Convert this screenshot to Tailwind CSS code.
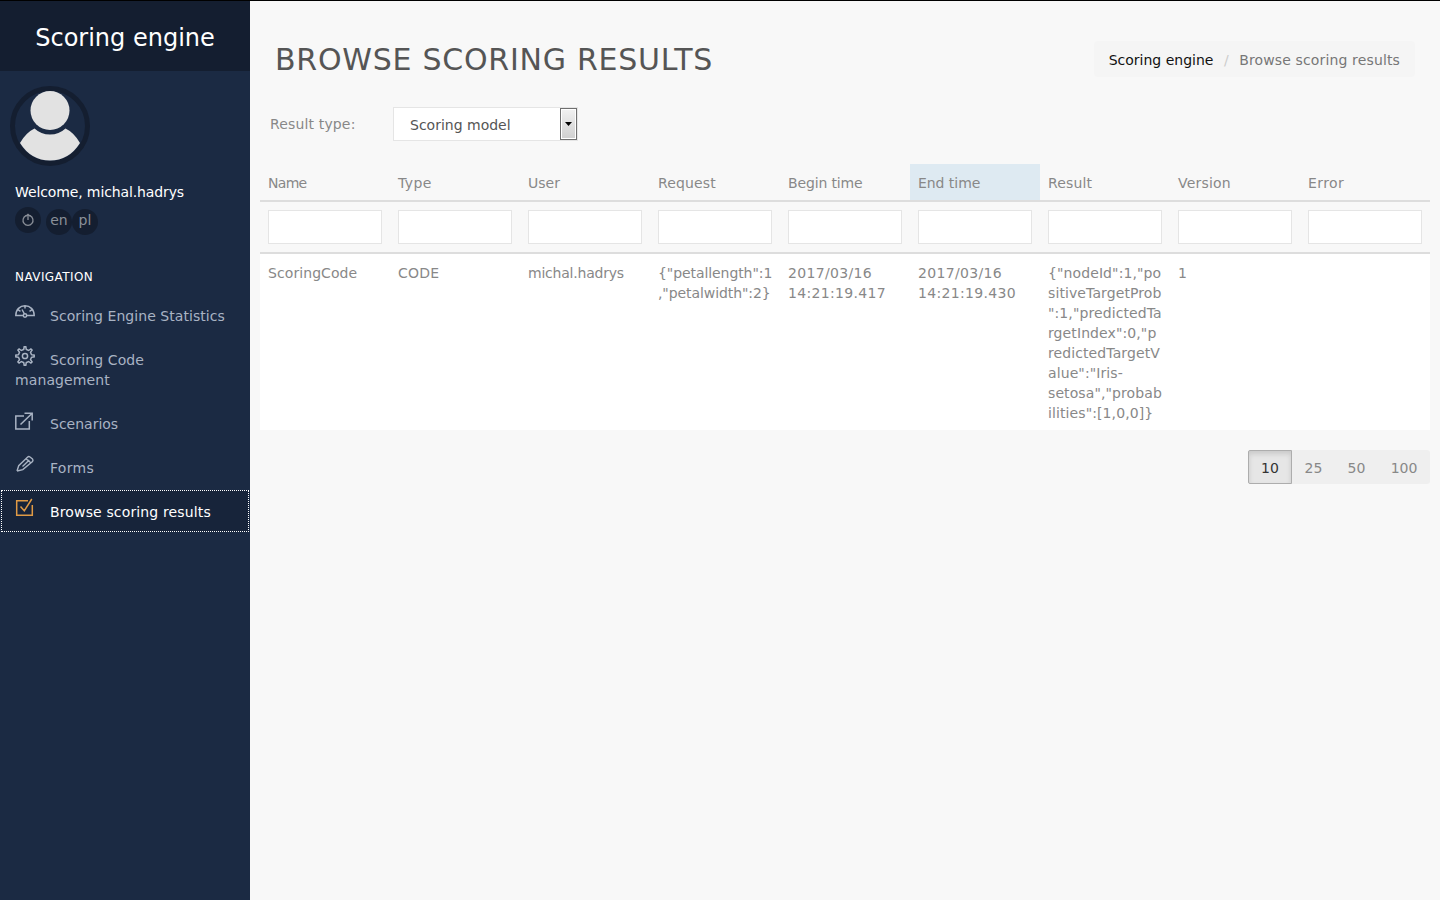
<!DOCTYPE html>
<html lang="en">
<head>
<meta charset="utf-8">
<title>Scoring engine</title>
<script src="https://cdn.jsdelivr.net/npm/@tailwindcss/browser@4"></script>
</head>
<body class="flex h-[900px] overflow-hidden border-t border-black bg-[#f8f8f8] font-['DejaVu_Sans',sans-serif] text-[14px] leading-5 text-[#888]">
<aside class="flex w-[250px] shrink-0 flex-col bg-[#1b2a43]">
  <div class="flex h-[70px] items-center justify-center bg-[#141e30] pt-1 text-[24px] text-white">Scoring engine</div>
  <div class="pt-[15px] pl-[10px]">
    <svg class="block" width="80" height="80" viewBox="0 0 80 80">
      <circle cx="40" cy="40" r="37.500" fill="none" stroke="#141e30" stroke-width="5"/>
      <circle cx="40" cy="24.500" r="19.500" fill="#e2e2e2"/>
      <path d="M24.500 42.500Q31 48.500 40 48.500Q49 48.500 55.500 42.500Q64 46.500 70 57Q59 74.500 40 74.500Q21 74.500 10 57Q16 46.500 24.500 42.500Z" fill="#e2e2e2"/>
    </svg>
  </div>
  <div class="mt-4 pl-[15px] tracking-[-0.12px] text-white">Welcome, michal.hadrys</div>
  <div class="mt-[5px] flex h-7 pl-[15px] text-[#8a8f98]">
    <span class="flex size-[26px] items-center justify-center rounded-full bg-[#141e30]">
      <svg width="14" height="14" viewBox="0 0 14 14" fill="none" stroke="#8a8f98" stroke-width="1.300"><path d="M5 2.700A5 5 0 1 0 9 2.700M4.800 3.200L7 1.300L9.200 3.200M7 1V7"/></svg>
    </span>
    <span class="mt-0.5 ml-[5px] flex size-[26px] justify-center rounded-full bg-[#141e30] pt-px">en</span>
    <span class="mt-0.5 flex size-[26px] justify-center rounded-full bg-[#141e30] pt-px">pl</span>
  </div>
  <div class="mt-8 pl-[15px] text-[12px] tracking-[0.42px] text-white">NAVIGATION</div>
  <nav class="mt-[7px] flex flex-col gap-0.5 text-[#a9b3c3]">
    <a class="block px-[15px] pt-3 pb-[10px]"><svg class="-mt-2 mr-[15px] inline-block align-[-1px]" width="20" height="20" viewBox="0 0 20 20" fill="none" stroke="currentColor" stroke-width="1.500"><path d="M8.300 13.500H.8C.8 7.500 5 3.800 10 3.800S19.200 7.500 19.200 13.500H11.700M10 3.800V6.500M3.300 7.800L5.500 9.300M16.700 7.800L14.500 9.300M7 7.500L9.500 12"/><circle cx="10" cy="13.500" r="1.700"/></svg><span class="tracking-[0.06px]">Scoring Engine Statistics</span></a>
    <a class="block px-[15px] pt-3 pb-[10px]"><svg class="-mt-2 mr-[15px] inline-block align-[-1px]" width="20" height="20" viewBox="0 0 20 20" fill="none" stroke="currentColor" stroke-width="1.500"><path d="M8.700 3.500L9.200.8H10.800L11.300 3.500L13.600 4.500L15.900 2.900L17.100 4.100L15.500 6.400L16.500 8.700L19.200 9.200V10.800L16.500 11.300L15.500 13.600L17.100 15.900L15.900 17.100L13.600 15.500L11.300 16.500L10.800 19.200H9.200L8.700 16.500L6.400 15.500L4.100 17.100L2.900 15.900L4.500 13.600L3.500 11.300L.8 10.800V9.200L3.500 8.700L4.500 6.400L2.900 4.100L4.100 2.900L6.400 4.500Z"/><circle cx="10" cy="10" r="2.600"/></svg><span class="tracking-[0.1px]">Scoring Code management</span></a>
    <a class="block px-[15px] pt-3 pb-[10px]"><svg class="-mt-2 mr-[15px] inline-block align-[-1px]" width="20" height="20" viewBox="0 0 20 20" fill="none" stroke="currentColor" stroke-width="1.500"><path d="M9 6H.8V19H14.300V11M9.500 3.200H17.200V10.500M17.200 3.200L5.500 14.500"/></svg>Scenarios</a>
    <a class="block px-[15px] pt-3 pb-[10px]"><svg class="-mt-2 mr-[15px] inline-block align-[-1px]" width="20" height="20" viewBox="0 0 20 20" fill="none" stroke="currentColor" stroke-width="1.400"><path d="M2 17L3.700 11.700L12.500 3.200Q13.700 2 15 3L17.500 5Q18.500 6.200 17.500 7.500L7.800 15.600L2 17M11 4.700L15.800 8.800M14.300 6L7.500 12.500"/></svg><span class="tracking-[0.3px]">Forms</span></a>
    <a class="mx-px block h-[42px] border border-dotted border-white bg-[#17243a] px-[13px] pt-[11px] text-white"><svg class="-mt-2 mr-[15px] inline-block align-[-1px] text-[#e09a45]" width="20" height="20" viewBox="0 0 20 20" fill="none" stroke="currentColor" stroke-width="1.500"><path d="M13 2.700H1.700V17.300H17.300V7M5.500 8.500L9.300 12.800L16.800 1"/></svg><span class="tracking-[0.14px]">Browse scoring results</span></a>
  </nav>
</aside>
<main class="min-w-0 flex-1 px-[10px]">
  <header class="flex h-[76px] justify-between px-[15px] pt-10">
    <h1 class="pt-px text-[30px] leading-9 tracking-[0.75px] text-[#555]">BROWSE SCORING RESULTS</h1>
    <div class="flex h-9 items-center rounded-sm bg-[#f5f5f5] px-[15px] pt-0.5"><span class="text-[#111]">Scoring engine</span><span class="mx-[10.500px] text-[#ccc]">/</span><span class="tracking-[0.14px] text-[#777]">Browse scoring results</span></div>
  </header>
  <div class="mt-[30px] flex h-[34px] pl-[10px]">
    <span class="w-[123px] pt-[7px] tracking-[0.15px]">Result type:</span>
    <div class="flex w-[185px] justify-between border border-[#e5e5e5] bg-white text-[#555]">
      <span class="pt-[7px] pl-4">Scoring model</span>
      <span class="flex w-[17px] items-center justify-center border border-[#707070] bg-linear-to-b from-[#f2f2f2] to-[#cfcfcf] shadow-[inset_0_0_0_1px_#fff]"><svg width="7" height="4" viewBox="0 0 7 4"><path d="M0 0H7L3.500 4Z" fill="#000"/></svg></span>
    </div>
  </div>
  <table class="mt-[23px] w-[1170px] table-fixed border-collapse text-left">
    <thead>
      <tr class="h-[37px] [&>th]:px-2 [&>th]:pt-[1px] [&>th]:font-normal"><th class="tracking-[-0.7px]">Name</th><th class="tracking-[0.4px]">Type</th><th>User</th><th class="tracking-[0.15px]">Request</th><th class="tracking-[-0.15px]">Begin time</th><th class="bg-[#deeaf2] tracking-[-0.05px]">End time</th><th class="tracking-[0.15px]">Result</th><th class="tracking-[0.2px]">Version</th><th class="tracking-[0.4px]">Error</th></tr>
      <tr class="h-[52px] border-y-2 border-[#ddd] [&>th]:px-2 [&>th]:py-0 [&_div]:h-[34px] [&_div]:border [&_div]:border-[#e5e5e5] [&_div]:bg-white"><th><div></div></th><th><div></div></th><th><div></div></th><th><div></div></th><th><div></div></th><th><div></div></th><th><div></div></th><th><div></div></th><th><div></div></th></tr>
    </thead>
    <tbody>
      <tr class="h-[177px] bg-white align-top [&>td]:px-2 [&>td]:pt-[9px] [&>td]:whitespace-nowrap"><td class="tracking-[0.08px]">ScoringCode</td><td class="tracking-[0.2px]">CODE</td><td class="tracking-[-0.22px]">michal.hadrys</td><td class="tracking-[-0.08px]">{"petallength":1<br>,"petalwidth":2}</td><td class="tracking-[0.32px]">2017/03/16<br>14:21:19.417</td><td class="tracking-[0.32px]">2017/03/16<br>14:21:19.430</td><td class="tracking-[0.1px]">{"nodeId":1,"po<br>sitiveTargetProb<br>":1,"predictedTa<br>rgetIndex":0,"p<br>redictedTargetV<br>alue":"Iris-<br>setosa","probab<br>ilities":[1,0,0]}</td><td>1</td><td></td></tr>
    </tbody>
  </table>
  <div class="mt-5 flex justify-end">
    <div class="flex h-[34px] rounded-[3px] bg-[#efefef] leading-9">
      <span class="w-11 rounded-l-[2px] border border-[#adadad] bg-[#e6e6e6] text-center leading-[34px] text-[#333] shadow-[inset_0_3px_5px_rgba(0,0,0,0.125)]">10</span><span class="w-[43px] text-center">25</span><span class="w-[43px] text-center">50</span><span class="w-[52px] text-center">100</span>
    </div>
  </div>
</main>
</body>
</html>
